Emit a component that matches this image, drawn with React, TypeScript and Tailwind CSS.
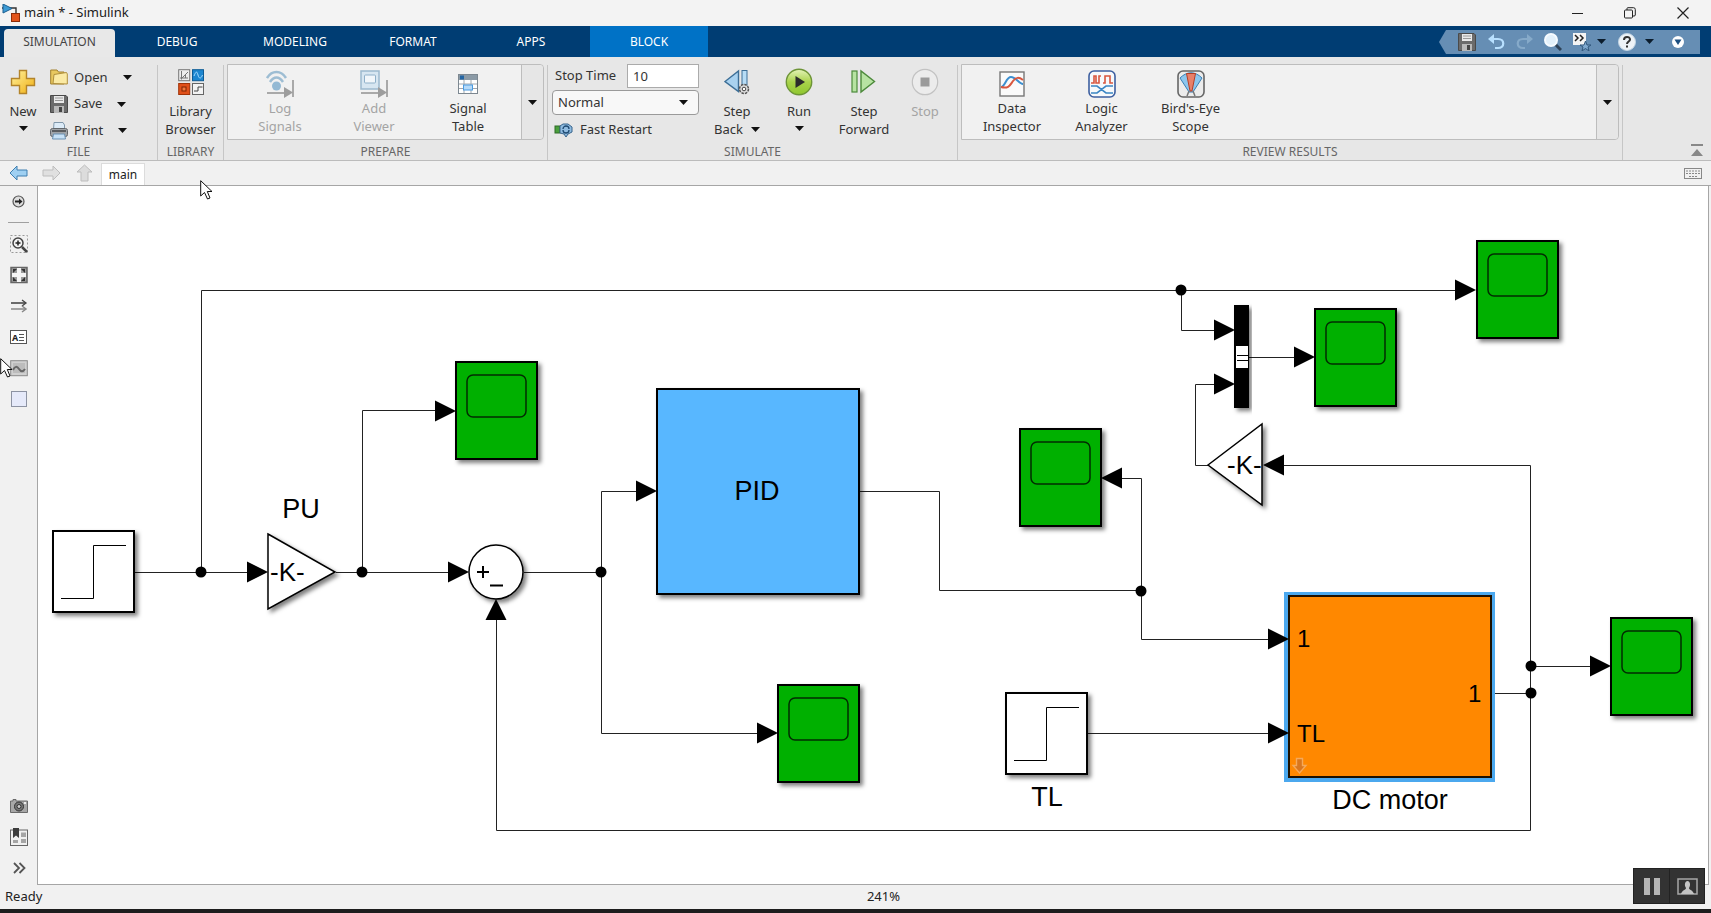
import React from "react";

function Caret({ color = "#111" }: { color?: string }) {
    return (
        <svg width="9" height="5" viewBox="0 0 9 5" className="shrink-0">
            <path d="M0 0H9L4.5 5Z" fill={color} />
        </svg>
    );
}

function AppIcon() {
    return (
        <svg width="18" height="18" viewBox="0 0 18 18">
            <path d="M0 4H14V10" fill="none" stroke="#333" strokeWidth="1.4" />
            <path d="M1 0L10 4.5L1 9Z" fill="#3c9ad4" stroke="#1c5f8f" />
            <rect x="9.5" y="9.5" width="8" height="8" fill="#e2541b" stroke="#8c2d0a" />
        </svg>
    );
}

function PlusIcon() {
    return (
        <svg width="26" height="26" viewBox="0 0 26 26">
            <defs>
                <linearGradient id="gold" x1="0" y1="0" x2="1" y2="1">
                    <stop offset="0" stopColor="#fff3a0" />
                    <stop offset="1" stopColor="#f0ae10" />
                </linearGradient>
            </defs>
            <path d="M9.5 1.5H16.5V9.5H24.5V16.5H16.5V24.5H9.5V16.5H1.5V9.5H9.5Z" fill="url(#gold)" stroke="#b3842a" strokeWidth="1.4" />
        </svg>
    );
}

function FolderIcon() {
    return (
        <svg width="18" height="18" viewBox="0 0 18 18">
            <path d="M.7 2H7L8.5 4H14V16H.7Z" fill="#e8c860" stroke="#a2802e" />
            <path d="M3 15.5L4 6.5L16.5 4.5L17.3 6V16Z" fill="#fbeaa4" stroke="#b08f3c" />
        </svg>
    );
}

function SaveIcon() {
    return (
        <svg width="18" height="18" viewBox="0 0 18 18">
            <path d="M.5 .5H16L17.5 2V17.5H.5Z" fill="#6b6b6b" stroke="#4a4a4a" />
            <rect x="4" y="1" width="10" height="7" fill="#e9e9e9" />
            <path d="M5 3H13M5 5.5H13" stroke="#999" />
            <rect x="4" y="11" width="10" height="7" fill="#b9b9b9" />
            <rect x="9" y="12" width="3" height="5" fill="#444" />
        </svg>
    );
}

function PrintIcon() {
    return (
        <svg width="18" height="18" viewBox="0 0 18 18">
            <path d="M4 .5H13L14.5 3V8H3.5Z" fill="#dcebf7" stroke="#8097aa" />
            <rect x=".5" y="6.5" width="17" height="8" rx="2" fill="#a0a4a8" stroke="#62666a" />
            <path d="M2 9H16" stroke="#5a5d60" strokeWidth="2" />
            <path d="M3.5 12H14.5L15.5 17H2.5Z" fill="#c7e1f6" stroke="#6b91b3" />
        </svg>
    );
}

function LibraryIcon() {
    return (
        <svg width="26" height="26" viewBox="0 0 26 26">
            <rect x=".7" y=".7" width="11" height="11" fill="#eee" stroke="#777" />
            <path d="M3.5 2V10.500M2 9H10M4 9L10 3M7.500 5V9" stroke="#777" fill="none" />
            <rect x="14.5" y=".7" width="11" height="11" fill="#1d86d0" stroke="#0d5b95" />
            <path d="M16 7C18 2 19 2 20 6S23 10 24.5 6" stroke="#a5dcff" fill="none" />
            <rect x=".7" y="14.5" width="11" height="11" fill="#e0501a" stroke="#a03208" />
            <rect x="4" y="18" width="4" height="4" fill="#f3793e" stroke="#7d2505" />
            <rect x="14.5" y="14.5" width="11" height="11" fill="#f3f3f3" stroke="#666" />
            <path d="M16 22H20V18H24.5" stroke="#444" fill="none" />
        </svg>
    );
}

function LogIcon() {
    return (
        <svg width="28" height="28" viewBox="0 0 28 28" fill="none">
            <path d="M1 8C6 0 15 0 20 8M4 12C8 6 13 6 17 12" stroke="#9dbdd3" strokeWidth="2.5" />
            <circle cx="10.5" cy="16" r="4.5" fill="#93b9d4" />
            <path d="M1 23H19M27 10V27" stroke="#a9a9a9" strokeWidth="2" />
            <path d="M18 17L27 22.5L18 28Z" fill="#9d9d9d" />
        </svg>
    );
}

function ViewerIcon() {
    return (
        <svg width="28" height="28" viewBox="0 0 28 28" fill="none">
            <rect x="1" y="1" width="18" height="18" fill="#d7e6f1" stroke="#9cb9ce" strokeWidth="1.5" />
            <rect x="4.5" y="5" width="11" height="8" rx="1" fill="#f1f6fa" stroke="#8fb0c9" />
            <path d="M1 23H19M27 10V27" stroke="#a9a9a9" strokeWidth="2" />
            <path d="M18 17L27 22.5L18 28Z" fill="#9d9d9d" />
        </svg>
    );
}

function TableIcon() {
    return (
        <svg width="20" height="20" viewBox="0 0 20 20" fill="none">
            <rect x=".5" y=".5" width="19" height="19" fill="#fff" stroke="#7d8891" />
            <rect x="1" y="1" width="18" height="5" fill="#8b9aa6" />
            <rect x="2" y="1.5" width="4" height="4" fill="#2465a3" />
            <path d="M1 10H19M1 14.5H19M6 6V19M13 6V19" stroke="#a0a8af" />
            <rect x="5.5" y="11" width="9" height="5" fill="#b5daf9" stroke="#4a9ae0" />
        </svg>
    );
}

function StepBackIcon() {
    return (
        <svg width="26" height="26" viewBox="0 0 26 26">
            <path d="M14.500 2V22.500L1 12.500Z" fill="#a9d2f0" stroke="#3d6f97" strokeWidth="1.4" />
            <rect x="18" y="1.5" width="5" height="18" fill="#b7dcf5" stroke="#3d6f97" />
            <circle cx="20" cy="20" r="4.5" fill="#ddd" stroke="#555" strokeWidth="1.5" strokeDasharray="2.5 1" />
            <circle cx="20" cy="20" r="1.8" fill="#fff" stroke="#444" />
        </svg>
    );
}

function RunIcon() {
    return (
        <svg width="28" height="28" viewBox="0 0 28 28">
            <defs>
                <linearGradient id="run" x1="0" y1="0" x2="0" y2="1">
                    <stop offset="0" stopColor="#e4f3b8" />
                    <stop offset=".5" stopColor="#a9d34b" />
                    <stop offset="1" stopColor="#8fc72e" />
                </linearGradient>
            </defs>
            <circle cx="14" cy="14" r="12.7" fill="url(#run)" stroke="#6d9437" strokeWidth="1.4" />
            <path d="M10.5 8L20 14L10.5 20Z" fill="#2b2b2b" />
        </svg>
    );
}

function StepForwardIcon() {
    return (
        <svg width="26" height="26" viewBox="0 0 26 26">
            <rect x="1" y="2" width="5" height="21" fill="#b7e3a2" stroke="#4c8a3b" strokeWidth="1.2" />
            <path d="M10 2V23L23.500 12.5Z" fill="#b7e3a2" stroke="#4c8a3b" strokeWidth="1.4" />
        </svg>
    );
}

function StopIcon() {
    return (
        <svg width="28" height="28" viewBox="0 0 28 28">
            <circle cx="14" cy="14" r="12.7" fill="#ececec" stroke="#c2c2c2" strokeWidth="1.2" />
            <rect x="9.5" y="9.5" width="9" height="9" fill="#9b9b9b" />
        </svg>
    );
}

function RestartIcon() {
    return (
        <svg width="20" height="16" viewBox="0 0 20 16">
            <rect x="1" y="4" width="5" height="7" fill="#4aa03c" stroke="#2e6b26" />
            <path d="M6 4L9 2H14L18 5V10L14 12L12 15L10 12L6 11Z" fill="#8fbbe0" stroke="#37648c" />
            <path d="M9 7A3 3 0 0 1 15 7M15 8A3 3 0 0 1 9 8" fill="none" stroke="#1f4a72" strokeWidth="1.3" />
        </svg>
    );
}

function InspectorIcon() {
    return (
        <svg width="26" height="26" viewBox="0 0 26 26" fill="none">
            <rect x="1" y="1" width="24" height="24" fill="#fafafa" stroke="#777" strokeWidth="1.4" />
            <path d="M2 16C6 16 7 6 12 6S20 13 24 13" stroke="#3b8fd1" strokeWidth="2" />
            <path d="M2 16C10 18 11 14 14 10S20 6 24 9" stroke="#d9573f" strokeWidth="2" />
        </svg>
    );
}

function LogicIcon() {
    return (
        <svg width="28" height="28" viewBox="0 0 28 28" fill="none">
            <rect x="1" y="1" width="26" height="26" rx="5" fill="#f7f9fb" stroke="#3d5fa0" strokeWidth="1.6" />
            <path d="M3 13H6V6H8V13H11V6H13M15 13H17V6H22V13H25" stroke="#d9573f" strokeWidth="1.6" />
            <path d="M3 16H9L18 23H25M3 23H9L18 16H25" stroke="#3b86c4" strokeWidth="1.6" />
        </svg>
    );
}

function BirdIcon() {
    return (
        <svg width="28" height="28" viewBox="0 0 28 28">
            <rect x="1" y="1" width="26" height="26" rx="5" fill="#ececec" stroke="#666" strokeWidth="1.6" />
            <path d="M3 8C10 1 18 1 25 8L16 22H12Z" fill="#8cc6ee" stroke="#3a80b5" />
            <path d="M9.500 3.500H18.500L15 21H13Z" fill="#e8806a" stroke="#b53e26" />
            <path d="M12 21L10 26M16 21L18 26" stroke="#777" strokeWidth="1.5" />
        </svg>
    );
}

type ToolProps = {
    icon: React.ReactNode;
    lines: string[];
    width: string;
    gap?: string;
    caret?: "inline" | "below";
    disabled?: boolean;
};

function Tool({ icon, lines, width, gap = "mb-px", caret, disabled }: ToolProps) {
    return (
        <button disabled={disabled} className={`${width} flex shrink-0 flex-col items-center text-[13px] leading-[18px] ${disabled ? "text-[#a4a4a4]" : "text-[#333]"}`}>
            <span className={`${gap} flex h-7 items-center justify-center`}>{icon}</span>
            {lines.map((line, i) => (
                <span key={line} className="flex items-center gap-2 whitespace-nowrap">
                    {line}
                    {caret === "inline" && i === lines.length - 1 && <Caret />}
                </span>
            ))}
            {caret === "below" && (
                <span className="flex h-4 items-center">
                    <Caret />
                </span>
            )}
        </button>
    );
}

function Section({ title, width, children }: { title: string; width: string; children: React.ReactNode }) {
    return (
        <section className={`${width} flex flex-col`}>
            <div className="flex h-[87px] pt-[7px]">{children}</div>
            <h2 className="text-center text-xs leading-4 text-[#666]">{title}</h2>
        </section>
    );
}

function Divider() {
    return <div className="mt-2 w-px shrink-0 bg-[#c6c6c6]"></div>;
}

function Gallery({ label, children }: { label: string; children: React.ReactNode }) {
    return (
        <div className="mx-[3px] flex h-[76px] flex-1 rounded-r border border-[#bdbdbd] bg-[#f1f1f1]">
            <div className="flex flex-1 pt-[5px] pl-[5px]">{children}</div>
            <button aria-label={label} className="flex w-[22px] items-center justify-center rounded-r border-l border-[#bdbdbd] bg-[#e6e6e6]">
                <Caret />
            </button>
        </div>
    );
}

function FileRow({ icon, text }: { icon: React.ReactNode; text: string }) {
    return (
        <button className="flex h-[27px] items-center gap-[15px]">
            <span className="flex items-center gap-[6px]">
                {icon}
                {text}
            </span>
            <Caret />
        </button>
    );
}

function QuickAccess() {
    return (
        <div className="mr-[11px] ml-auto flex h-6 items-center self-center">
            <svg width="7" height="24" viewBox="0 0 7 24">
                <path d="M7 0V24L0 12Z" fill="#668eb4" />
            </svg>
            <div className="flex h-6 items-center bg-[#668eb4] pr-[15px] pl-3">
                <button aria-label="Save">
                    <SaveIcon />
                </button>
                <button aria-label="Undo" className="ml-3">
                    <svg width="17" height="18" viewBox="0 0 17 18" fill="none">
                        <path d="M3 6H10C17 6 17 15 10 15H7" stroke="#b8e0ff" strokeWidth="2.2" />
                        <path d="M6 1L0 6L6 11Z" fill="#b8e0ff" />
                    </svg>
                </button>
                <button aria-label="Redo" className="ml-[11px]">
                    <svg width="17" height="18" viewBox="0 0 17 18" fill="none">
                        <path d="M14 6H7C0 6 0 15 7 15H9" stroke="#86aac9" strokeWidth="2.2" />
                        <path d="M11 1L17 6L11 11Z" fill="#86aac9" />
                    </svg>
                </button>
                <button aria-label="Search" className="ml-[11px]">
                    <svg width="18" height="18" viewBox="0 0 18 18">
                        <path d="M11 11L17 17" stroke="#2d4257" strokeWidth="3" />
                        <circle cx="7" cy="7" r="6" fill="#e3f1fb" stroke="#f6fbff" strokeWidth="2" />
                    </svg>
                </button>
                <button aria-label="Favorites" className="ml-[11px] flex items-center gap-[6px]">
                    <svg width="18" height="18" viewBox="0 0 18 18">
                        <rect width="13" height="12" fill="#f4f4f4" />
                        <path d="M2 2L5 5L2 8M7 2L10 5L7 8" fill="none" stroke="#222" strokeWidth="1.5" />
                        <path d="M12.5 8L14 12H18L15 14L16 18L12.5 15.5L9 18L10 14L7 12H11Z" fill="#7fa9cf" stroke="#31577c" />
                    </svg>
                    <Caret color="#0b1c2c" />
                </button>
                <button aria-label="Help" className="ml-3 flex items-center gap-[9px]">
                    <svg width="18" height="18" viewBox="0 0 18 18">
                        <circle cx="9" cy="9" r="8.5" fill="#eef3f7" stroke="#c2d4e3" />
                        <path d="M6 7C6 3 12 3 12 6.5C12 8.5 9 8.5 9 11M9 12.5V14.5" fill="none" stroke="#333" strokeWidth="2" />
                    </svg>
                    <Caret color="#0b1c2c" />
                </button>
                <button aria-label="Toolstrip options" className="ml-[17px]">
                    <svg width="14" height="14" viewBox="0 0 14 14">
                        <circle cx="7" cy="7" r="6" fill="#fff" />
                        <path d="M3.500 4.500H10.500L7 10Z" fill="#1d4f80" />
                    </svg>
                </button>
            </div>
        </div>
    );
}

const tabs = ["DEBUG", "MODELING", "FORMAT", "APPS", "BLOCK"];

function TopBars() {
    return (
        <header>
            <div className="flex h-[26px] items-center bg-[#f3f3f3] pl-[2px] text-[13px] text-[#1a1a1a]">
                <AppIcon />
                <h1 className="ml-1">main * - Simulink</h1>
                <div className="ml-auto flex pr-[22px]">
                    <button aria-label="Minimize" className="mr-[40px]">
                        <svg width="12" height="12" viewBox="0 0 12 12">
                            <path d="M0 6.5H11" stroke="#222" />
                        </svg>
                    </button>
                    <button aria-label="Restore" className="mr-[41px]">
                        <svg width="12" height="12" viewBox="0 0 12 12" fill="none" stroke="#222">
                            <rect x=".5" y="3" width="8" height="8" rx="1" />
                            <path d="M3 3V1.5Q3 .7 4 .7H9.5Q11.3 .7 11.3 2.5V8Q11.3 9 10 9H8.5" />
                        </svg>
                    </button>
                    <button aria-label="Close">
                        <svg width="12" height="12" viewBox="0 0 12 12">
                            <path d="M.5 .5L11.5 11.5M11.5 .5L.5 11.5" stroke="#222" strokeWidth="1.2" />
                        </svg>
                    </button>
                </div>
            </div>
            <nav className="flex h-[31px] bg-[#003d73] pl-1 text-xs text-white">
                <button className="mr-[3px] h-7 w-[111px] self-end rounded-t-sm bg-[#e8e8e8] pb-[2px] text-[#444]">SIMULATION</button>
                {tabs.map((tab) => (
                    <button key={tab} className={tab === "BLOCK" ? "w-[118px] bg-[#0072c6]" : "w-[118px]"}>
                        {tab}
                    </button>
                ))}
                <QuickAccess />
            </nav>
        </header>
    );
}

function Toolstrip() {
    return (
        <div className="flex h-[104px] border-b border-[#bcbcbc] bg-[#e7e7e7]">
            <Section title="FILE" width="w-[157px]">
                <div className="pt-1">
                    <Tool icon={<PlusIcon />} lines={["New"]} width="w-[46px]" gap="mb-[6px]" caret="below" />
                </div>
                <div className="ml-1 flex flex-col items-start text-[13px] text-[#333]">
                    <FileRow icon={<FolderIcon />} text="Open" />
                    <FileRow icon={<SaveIcon />} text="Save" />
                    <FileRow icon={<PrintIcon />} text="Print" />
                </div>
            </Section>
            <Divider />
            <Section title="LIBRARY" width="w-[65px]">
                <div className="pt-1">
                    <Tool icon={<LibraryIcon />} lines={["Library", "Browser"]} width="w-[65px]" gap="mb-[6px]" />
                </div>
            </Section>
            <Divider />
            <Section title="PREPARE" width="w-[323px]">
                <Gallery label="More prepare tools">
                    <Tool icon={<LogIcon />} lines={["Log", "Signals"]} width="w-[94px]" disabled />
                    <Tool icon={<ViewerIcon />} lines={["Add", "Viewer"]} width="w-[94px]" disabled />
                    <Tool icon={<TableIcon />} lines={["Signal", "Table"]} width="w-[94px]" />
                </Gallery>
            </Section>
            <Divider />
            <Section title="SIMULATE" width="w-[409px]">
                <div className="ml-1 flex w-[148px] flex-col text-[13px] text-[#333]">
                    <div className="flex h-6 items-center">
                        <label htmlFor="stop-time" className="w-[75px] pl-[3px]">Stop Time</label>
                        <input id="stop-time" defaultValue="10" className="h-6 w-[72px] border border-[#ababab] bg-white px-[5px]" />
                    </div>
                    <div className="relative mt-[2px] flex items-center">
                        <select aria-label="Simulation mode" className="h-[25px] w-[147px] appearance-none rounded border border-[#9a9a9a] bg-[#f8f8f8] px-[5px]">
                            <option>Normal</option>
                        </select>
                        <span className="pointer-events-none absolute right-3 flex">
                            <Caret />
                        </span>
                    </div>
                    <button className="mt-[3px] flex h-6 items-center gap-[6px] pl-[2px]">
                        <RestartIcon />
                        Fast Restart
                    </button>
                </div>
                <div className="ml-[5px] flex pt-1">
                    <Tool icon={<StepBackIcon />} lines={["Step", "Back"]} width="w-[64px]" gap="mb-[6px]" caret="inline" />
                    <Tool icon={<RunIcon />} lines={["Run"]} width="w-[60px]" gap="mb-[6px]" caret="below" />
                    <Tool icon={<StepForwardIcon />} lines={["Step", "Forward"]} width="w-[70px]" gap="mb-[6px]" />
                    <Tool icon={<StopIcon />} lines={["Stop"]} width="w-[52px]" gap="mb-[6px]" disabled />
                </div>
            </Section>
            <Divider />
            <Section title="REVIEW RESULTS" width="flex-1">
                <Gallery label="More review tools">
                    <Tool icon={<InspectorIcon />} lines={["Data", "Inspector"]} width="w-[90px]" />
                    <Tool icon={<LogicIcon />} lines={["Logic", "Analyzer"]} width="w-[89px]" />
                    <Tool icon={<BirdIcon />} lines={["Bird's-Eye", "Scope"]} width="w-[89px]" />
                </Gallery>
            </Section>
            <Divider />
            <div className="flex w-[88px] items-end justify-end pr-2 pb-1">
                <button aria-label="Collapse toolstrip">
                    <svg width="12" height="12" viewBox="0 0 12 12">
                        <path d="M0 0H12V2H0ZM6 5L12 12H0Z" fill="#888" />
                    </svg>
                </button>
            </div>
        </div>
    );
}

function NavBar() {
    return (
        <div className="flex h-[25px] items-center border-b border-[#a6a6a6] bg-[#f1f1f1]">
            <button aria-label="Back" className="ml-[9px]">
                <svg width="19" height="16" viewBox="0 0 19 16">
                    <path d="M8 1L1 8L8 15V11H18V5H8Z" fill="#9fd0f2" stroke="#3f7fb0" />
                </svg>
            </button>
            <button aria-label="Forward" className="ml-[14px]">
                <svg width="19" height="16" viewBox="0 0 19 16">
                    <path d="M11 1L18 8L11 15V11H1V5H11Z" fill="#e0e0e0" stroke="#bdbdbd" />
                </svg>
            </button>
            <button aria-label="Up" className="ml-[15px]">
                <svg width="17" height="18" viewBox="0 0 17 18">
                    <path d="M8.5 1L16 8H12V17H5V8H1Z" fill="#dcdcdc" stroke="#bdbdbd" />
                </svg>
            </button>
            <button className="ml-2 h-[22px] w-11 self-end border-x border-t border-[#dcdcdc] bg-white text-xs text-[#222]">main</button>
            <button aria-label="Keyboard" className="mr-[9px] ml-auto">
                <svg width="18" height="11" viewBox="0 0 18 11" fill="none" stroke="#888">
                    <rect x=".5" y=".5" width="17" height="10" />
                    <path d="M2 3H16M2 5.5H16M5 8.5H13" strokeDasharray="2 1" />
                </svg>
            </button>
        </div>
    );
}

function Palette() {
    return (
        <aside className="flex w-[37px] shrink-0 flex-col items-center bg-[#f1f1f1] pt-[9px] pb-2">
            <button aria-label="Hide browser">
                <svg width="13" height="13" viewBox="0 0 13 13" fill="none" stroke="#555">
                    <circle cx="6.5" cy="6.5" r="5.5" fill="#ddd" strokeWidth="1.2" />
                    <path d="M3 6.5H8" stroke="#222" strokeWidth="2" />
                    <path d="M7 3.5L10.5 6.5L7 9.5Z" fill="#222" stroke="none" />
                </svg>
            </button>
            <div className="mt-[14px] mb-3 h-px w-[21px] bg-[#a0a0a0]"></div>
            <div className="flex flex-col items-center gap-[13px]">
                <button aria-label="Zoom">
                    <svg width="18" height="18" viewBox="0 0 18 18" fill="none">
                        <rect x=".5" y=".5" width="17" height="17" stroke="#999" strokeDasharray="2 2" />
                        <circle cx="8" cy="8" r="5" fill="#f4f4f4" stroke="#444" strokeWidth="1.5" />
                        <path d="M5.5 8H10.5M8 5.5V10.5" stroke="#222" strokeWidth="1.5" />
                        <path d="M12 12L17 17" stroke="#444" strokeWidth="2.5" />
                    </svg>
                </button>
                <button aria-label="Fit to view">
                    <svg width="18" height="18" viewBox="0 0 18 18" fill="none">
                        <rect x="1" y="1.5" width="16" height="15" fill="#9c9c9c" stroke="#666" strokeWidth="1.5" />
                        <path d="M7 2H11V16H7ZM2 7H16V11H2Z" fill="#f5f5f5" />
                        <path d="M3 3H7L3 7ZM15 3H11L15 7ZM3 15H7L3 11ZM15 15H11L15 11Z" fill="#333" />
                    </svg>
                </button>
                <button aria-label="Signal routing">
                    <svg width="18" height="18" viewBox="0 0 18 18" fill="none">
                        <path d="M1 6H15" stroke="#222" strokeWidth="1.3" />
                        <path d="M12 3L16 6L12 9" stroke="#444" strokeWidth="1.3" />
                        <path d="M1 12H15" stroke="#888" strokeWidth="1.5" />
                        <path d="M12 9L16 12L12 15" stroke="#888" strokeWidth="1.5" />
                    </svg>
                </button>
                <button aria-label="Annotation" className="flex h-[18px] w-[18px] items-center">
                    <span className="flex h-[14px] w-[17px] items-center justify-center gap-px border border-[#555] bg-white text-[9px] leading-none font-bold text-[#222]">
                        A
                        <svg width="5" height="7" viewBox="0 0 5 7" stroke="#555">
                            <path d="M0 .5H5M0 3.5H5M0 6.5H5" />
                        </svg>
                    </span>
                </button>
                <button aria-label="Image">
                    <svg width="18" height="18" viewBox="0 0 18 18" fill="none">
                        <rect x=".7" y="1.7" width="16.6" height="15" fill="#d0d0d0" stroke="#8a8a8a" />
                        <rect x="3" y="4" width="12" height="10" fill="#bcbcbc" />
                        <path d="M3 11C5 7 7 7 9 10S13 13 15 10" stroke="#666" strokeWidth="2" />
                    </svg>
                </button>
                <button aria-label="Area">
                    <svg width="18" height="18" viewBox="0 0 18 18">
                        <rect x="1.5" y="1.5" width="15" height="15" fill="#e6eafa" stroke="#8d93a3" />
                    </svg>
                </button>
            </div>
            <div className="mt-auto flex flex-col items-center gap-[13px]">
                <button aria-label="Screenshot">
                    <svg width="18" height="18" viewBox="0 0 18 18">
                        <path d="M3 2.5H6V4H17.5V15.5H.5V4H3Z" fill="#a7a7a7" stroke="#6a6a6a" />
                        <circle cx="9" cy="9.5" r="4.5" fill="#777" stroke="#333" />
                        <circle cx="9" cy="9.5" r="2" fill="#c9c9c9" stroke="#333" />
                        <rect x="14" y="5" width="2" height="2" fill="#eee" />
                    </svg>
                </button>
                <button aria-label="Model data">
                    <svg width="18" height="18" viewBox="0 0 18 18">
                        <rect x=".5" y="2" width="17" height="15.5" fill="#f0f0f0" stroke="#666" />
                        <path d="M11 4.5H16V9H11ZM11 11H16V15H11ZM3 12H8V15H3Z" fill="#a5a5a5" />
                        <path d="M3 0H9V10L6 7.5L3 10Z" fill="#3c3c3c" />
                    </svg>
                </button>
                <button aria-label="Expand palette">
                    <svg width="18" height="18" viewBox="0 0 18 18" fill="none" stroke="#555" strokeWidth="1.8">
                        <path d="M4 4L9 9L4 14M9.5 4L14.5 9L9.5 14" />
                    </svg>
                </button>
            </div>
        </aside>
    );
}

function Scope({ x, y }: { x: number; y: number }) {
    return (
        <g transform={`translate(${x} ${y})`}>
            <rect width="81" height="97" fill="#00b000" stroke="#000" strokeWidth="2" filter="url(#shadow)" />
            <rect x="11" y="13" width="59" height="42" rx="6" fill="none" stroke="#022b02" strokeWidth="1.5" />
        </g>
    );
}

function StepBlock({ x, y }: { x: number; y: number }) {
    return (
        <g transform={`translate(${x} ${y})`} fill="none" stroke="#000">
            <rect width="81" height="81" fill="#fff" strokeWidth="2" filter="url(#shadow)" />
            <path d="M8 67.5H40.5V14.5H73" />
        </g>
    );
}

const scopes = [
    [456, 362],
    [778, 685],
    [1020, 429],
    [1477, 241],
    [1315, 309],
    [1611, 618],
];

const wires = [
    "M134 572.5H250",
    "M201.5 572V290.5H1458",
    "M336 572.5H450",
    "M362.5 572V410.5H436",
    "M524 572.5H601.5V491.5H638",
    "M601.5 572V733.5H760",
    "M860 491.5H939.5V590.5H1141.5V639.5H1270",
    "M1141.5 590V478.5H1120",
    "M1088 733.5H1270",
    "M1181.5 290V330.5H1216",
    "M1249 357.5H1296",
    "M1208 465.5H1195.5V384.5H1216",
    "M1282 465.5H1530.5V830.5H496.5V618",
    "M1490 693.5H1530",
    "M1530 666.5H1592",
];

// tips of the arrows that point right
const arrows = [
    [268, 572],
    [469, 572],
    [456, 411],
    [657, 491],
    [778, 733],
    [1289, 639],
    [1289, 733],
    [1476, 290],
    [1235, 330],
    [1235, 384],
    [1315, 357],
    [1611, 666],
];

const dots = [
    [201, 572],
    [362, 572],
    [601, 572],
    [1141, 591],
    [1181, 290],
    [1531, 666],
    [1531, 693],
];

function Diagram() {
    return (
        <svg width="1670" height="698" viewBox="38 186 1670 698" className="block" fontFamily="'Liberation Sans', Arial, sans-serif">
            <defs>
                <filter id="shadow" x="-10%" y="-10%" width="130%" height="130%">
                    <feDropShadow dx="3" dy="3" stdDeviation="2" floodColor="#000" floodOpacity=".5" />
                </filter>
            </defs>
            <path d={wires.join("")} fill="none" stroke="#222" />
            <rect x="1286.5" y="594.5" width="206" height="185" fill="none" stroke="#4ba8ee" strokeWidth="5" />
            {scopes.map(([x, y]) => (
                <Scope key={`${x}-${y}`} x={x} y={y} />
            ))}
            <StepBlock x={53} y={531} />
            <StepBlock x={1006} y={693} />
            <rect x="657" y="389" width="202" height="205" fill="#58b7ff" stroke="#000" strokeWidth="2" filter="url(#shadow)" />
            <rect x="1289" y="596" width="202" height="181" fill="#ff8800" stroke="#1c1000" strokeWidth="2" />
            <path d="M1296.5 758.5H1302.5V765.5H1306L1299.5 773L1293 765.5H1296.5Z" fill="#d9771f" stroke="#f5a95a" strokeWidth="1.4" />
            <path d="M268 534L335 572L268 609Z" fill="#fff" stroke="#000" strokeWidth="1.5" filter="url(#shadow)" />
            <path d="M1208 465L1262 424V505Z" fill="#fff" stroke="#000" strokeWidth="1.5" filter="url(#shadow)" />
            <circle cx="496" cy="572" r="27" fill="#fff" stroke="#000" strokeWidth="1.5" filter="url(#shadow)" />
            <path d="M477 572H489M483 566V578M490 585.5H503" stroke="#000" strokeWidth="2" />
            <rect x="1234" y="305" width="15" height="103" filter="url(#shadow)" />
            <path d="M1236 346H1248V368H1236Z" fill="#fff" />
            <path d="M1237 355.5H1248M1237 360.5H1248" stroke="#000" />
            {arrows.map(([x, y]) => (
                <path key={`${x}-${y}`} d="M0 0L-21 -10.5V10.5Z" transform={`translate(${x} ${y})`} />
            ))}
            <path d="M1101 478L1122 467.5V488.5ZM1263 465L1284 454.5V475.5ZM496 599L485.5 620H506.5Z" />
            {dots.map(([x, y]) => (
                <circle key={`${x}-${y}`} cx={x} cy={y} r="5.5" />
            ))}
            <g fontSize="26">
                <text x="270" y="581">-K-</text>
                <text x="1227" y="474">-K-</text>
            </g>
            <g fontSize="27" textAnchor="middle">
                <text x="757" y="500">PID</text>
                <text x="301" y="518">PU</text>
                <text x="1047" y="806">TL</text>
                <text x="1390" y="809">DC motor</text>
            </g>
            <g fontSize="24">
                <text x="1297" y="647">1</text>
                <text x="1297" y="742">TL</text>
                <text x="1468" y="702">1</text>
            </g>
        </svg>
    );
}

function Cursor() {
    return (
        <svg width="13" height="20" viewBox="0 0 13 20">
            <path d="M.7 .7V16L4.5 12.5L7.5 19L10 18L7.3 11.5H12Z" fill="#fff" stroke="#111" />
        </svg>
    );
}

export default function App() {
    return (
        <div className="relative flex h-screen flex-col overflow-hidden bg-[#f1f1f1] font-['Noto_Sans',sans-serif]">
            <TopBars />
            <Toolstrip />
            <NavBar />
            <main className="flex min-h-0 flex-1">
                <Palette />
                <div className="mr-[2px] min-w-0 flex-1 overflow-hidden border-x border-b border-[#a6a6a6] bg-white">
                    <Diagram />
                </div>
            </main>
            <footer className="grid h-6 grid-cols-3 items-center px-[5px] pb-px text-[13px] text-[#222]">
                <span>Ready</span>
                <span className="pl-[56px] text-center">241%</span>
            </footer>
            <div className="h-1 bg-[#1d1d1d]"></div>

            <div className="absolute right-[6px] bottom-[9px] flex h-9 border border-[#222] bg-[#333]">
                <button aria-label="Pause" className="flex w-9 items-center justify-center border-r border-[#222]">
                    <svg width="16" height="17" viewBox="0 0 16 17">
                        <path d="M0 0H6V17H0ZM10 0H16V17H10Z" fill="#b5b5b5" />
                    </svg>
                </button>
                <button aria-label="Webcam" className="flex w-[34px] items-center justify-center">
                    <svg width="21" height="17" viewBox="0 0 21 17">
                        <rect x="1" y="1" width="19" height="15" fill="none" stroke="#a8a8a8" strokeWidth="1.5" />
                        <path d="M4 16C5 12 9 12 9 10C7 7 8 3 10.5 3S14 7 12 10C12 12 16 12 17 16Z" fill="#c4c4c4" />
                    </svg>
                </button>
            </div>
            <div className="pointer-events-none absolute top-[180px] left-[200px]">
                <Cursor />
            </div>
            <div className="pointer-events-none absolute top-[358px] left-0">
                <Cursor />
            </div>
        </div>
    );
}
